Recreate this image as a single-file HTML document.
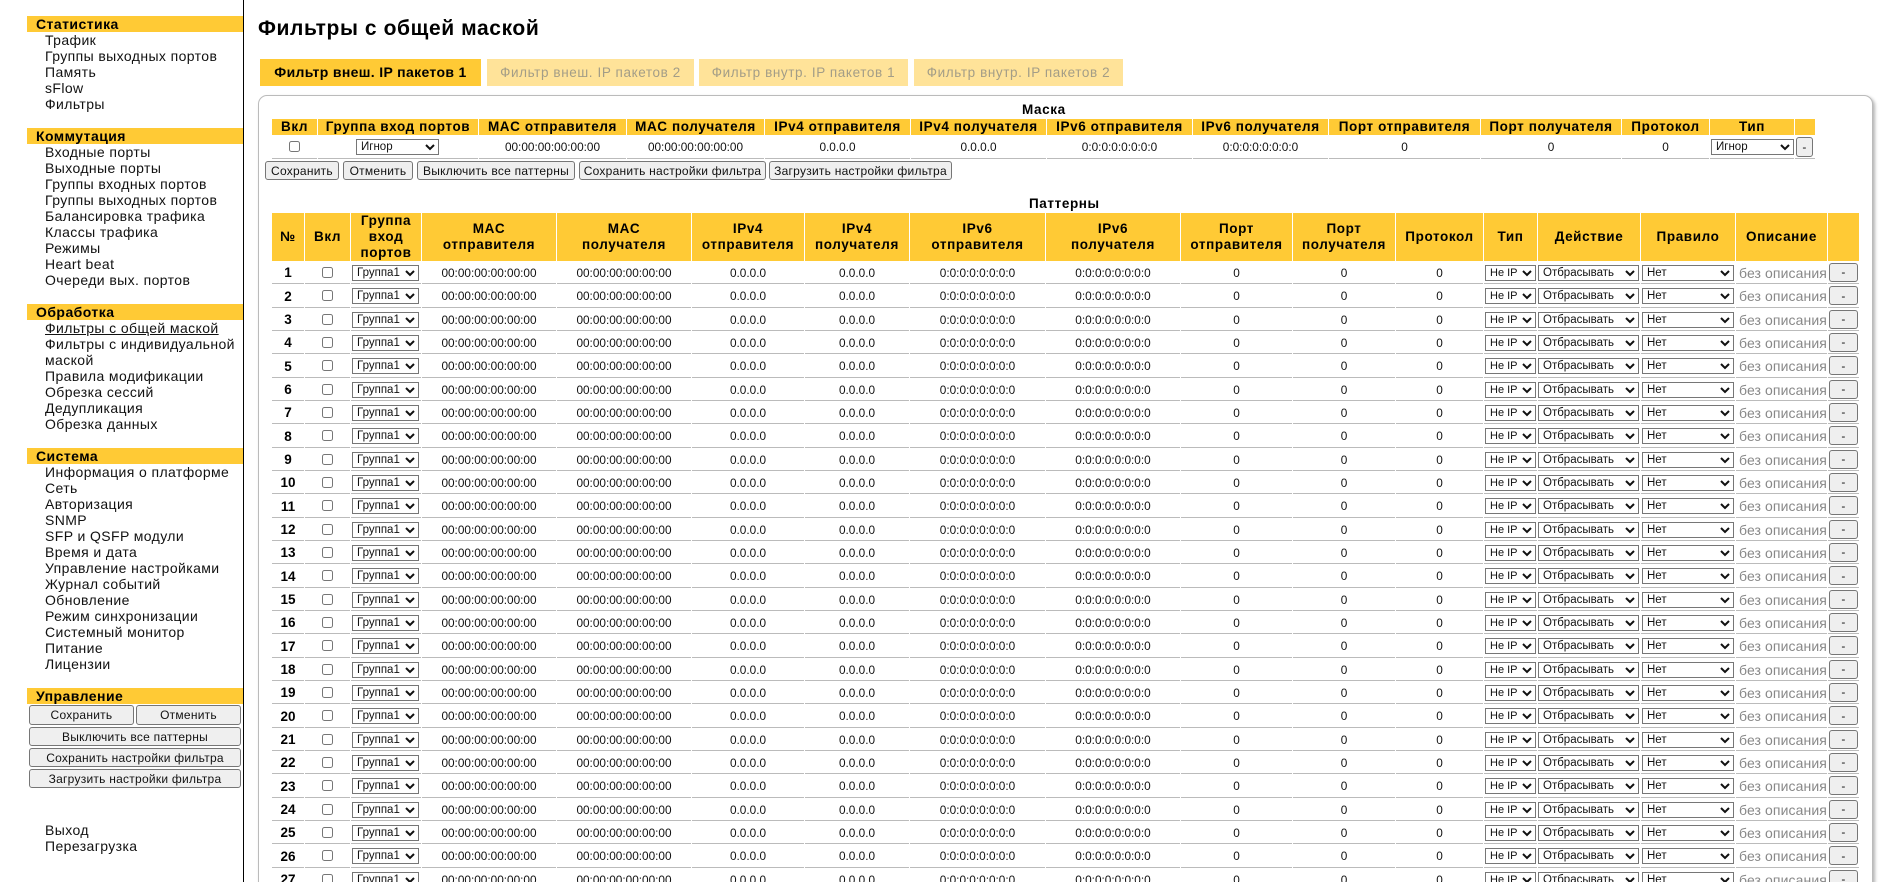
<!DOCTYPE html>
<html lang="ru"><head><meta charset="utf-8"><title>Фильтры с общей маской</title>
<style>
html,body{margin:0;padding:0;width:1903px;height:882px;overflow:hidden;background:#fff}
body{position:relative;font-family:"Liberation Sans","DejaVu Sans",sans-serif;color:#111;font-size:14px}
.abs,.h,.m,.btn,.tab{position:absolute}
.v{position:absolute;left:243px;top:0;width:1px;height:882px;background:#000}
.h{left:27px;width:216px;height:16px;line-height:16px;background:#ffca35;font-weight:bold;font-size:14px;letter-spacing:.45px;color:#000;padding-left:9px;box-sizing:border-box}
.m{left:45px;width:195px;line-height:16px;font-size:14px;letter-spacing:.4px;white-space:nowrap}
button{font-family:inherit;background:#efefef;border:1px solid #767676;border-radius:3px;padding:0;color:#111;box-sizing:border-box;font-size:12px;letter-spacing:.25px;margin:0}
.btn{height:19px;line-height:16px}
h1{position:absolute;left:258px;top:15px;margin:0;font-size:21px;line-height:28px;letter-spacing:.6px;color:#000;white-space:nowrap}
.tab{top:59px;height:27px;line-height:27px;text-align:center;font-size:13.5px;letter-spacing:.6px;background:#ffe399;color:#a39d87;white-space:nowrap}
.tab.on{background:#ffca35;color:#000;font-weight:bold;font-size:14px;letter-spacing:.35px}
.box{position:absolute;left:258px;top:95px;width:1615px;height:830px;border:1px solid #bbb;border-radius:9px;box-shadow:2px 2px 3px #b5b5b5;box-sizing:border-box;background:#fff}
.tt{position:absolute;font-weight:bold;font-size:13.5px;letter-spacing:.6px;line-height:16px;color:#000;white-space:nowrap}
table{position:absolute;left:271px;border-collapse:separate;border-spacing:1px 0;table-layout:fixed}
th{background:#ffca35;font-weight:bold;font-size:13.5px;letter-spacing:.6px;line-height:16px;padding:0;color:#000;text-align:center;overflow:hidden;white-space:nowrap}
td{padding:1px 0 0;height:23px;box-sizing:border-box;border-bottom:1px solid #bbb;text-align:center;vertical-align:middle;font-size:11.8px;color:#111;white-space:nowrap;overflow:hidden}
tr.b td{height:24px}
td.n{font-weight:bold;font-size:13.5px;color:#000}
input[type=checkbox]{width:11px;height:11px;display:block;margin:0 auto;position:relative;top:-.1px}
select{display:block;height:16px;padding:0;margin:0 0 0 1px;font-family:inherit;font-size:11.5px;letter-spacing:0;background:#fff;border:1px solid #767676;border-radius:0;color:#111;box-sizing:border-box;position:relative;top:.1px}
.g{width:67px}.t{width:51px;font-size:11px}.a{width:101px;margin-left:0}.r{width:92px}
.x{display:block;width:29px;height:19px;margin-left:1px;line-height:16px;position:relative;top:-.1px}
.d{display:block;width:91px;overflow:hidden;color:#888;font-size:14px;letter-spacing:.1px;text-align:left;padding-left:3px;box-sizing:border-box}
#mt td{height:24px}
#pt th{height:48px}
#mt th{height:16px}
</style></head><body>
<div class="h" style="top:16px">Статистика</div>
<div class="m" style="top:32px">Трафик</div>
<div class="m" style="top:48px">Группы выходных портов</div>
<div class="m" style="top:64px">Память</div>
<div class="m" style="top:80px">sFlow</div>
<div class="m" style="top:96px">Фильтры</div>
<div class="h" style="top:128px">Коммутация</div>
<div class="m" style="top:144px">Входные порты</div>
<div class="m" style="top:160px">Выходные порты</div>
<div class="m" style="top:176px">Группы входных портов</div>
<div class="m" style="top:192px">Группы выходных портов</div>
<div class="m" style="top:208px">Балансировка трафика</div>
<div class="m" style="top:224px">Классы трафика</div>
<div class="m" style="top:240px">Режимы</div>
<div class="m" style="top:256px">Heart beat</div>
<div class="m" style="top:272px">Очереди вых. портов</div>
<div class="h" style="top:304px">Обработка</div>
<div class="m" style="top:320px;text-decoration:underline">Фильтры с общей маской</div>
<div class="m" style="top:336px">Фильтры с индивидуальной</div>
<div class="m" style="top:352px">маской</div>
<div class="m" style="top:368px">Правила модификации</div>
<div class="m" style="top:384px">Обрезка сессий</div>
<div class="m" style="top:400px">Дедупликация</div>
<div class="m" style="top:416px">Обрезка данных</div>
<div class="h" style="top:448px">Система</div>
<div class="m" style="top:464px">Информация о платформе</div>
<div class="m" style="top:480px">Сеть</div>
<div class="m" style="top:496px">Авторизация</div>
<div class="m" style="top:512px">SNMP</div>
<div class="m" style="top:528px">SFP и QSFP модули</div>
<div class="m" style="top:544px">Время и дата</div>
<div class="m" style="top:560px">Управление настройками</div>
<div class="m" style="top:576px">Журнал событий</div>
<div class="m" style="top:592px">Обновление</div>
<div class="m" style="top:608px">Режим синхронизации</div>
<div class="m" style="top:624px">Системный монитор</div>
<div class="m" style="top:640px">Питание</div>
<div class="m" style="top:656px">Лицензии</div>
<div class="h" style="top:688px">Управление</div>
<button class="btn" style="left:29px;top:705px;width:105px;height:20px">Сохранить</button>
<button class="btn" style="left:136px;top:705px;width:105px;height:20px">Отменить</button>
<button class="btn" style="left:29px;top:727px;width:212px">Выключить все паттерны</button>
<button class="btn" style="left:29px;top:748px;width:212px">Сохранить настройки фильтра</button>
<button class="btn" style="left:29px;top:769px;width:212px">Загрузить настройки фильтра</button>
<div class="m" style="top:822px">Выход</div>
<div class="m" style="top:838px">Перезагрузка</div>
<div class="v"></div>
<h1>Фильтры с общей маской</h1>
<div class="tab on" style="left:260px;width:221px">Фильтр внеш. IP пакетов 1</div>
<div class="tab" style="left:487px;width:207px">Фильтр внеш. IP пакетов 2</div>
<div class="tab" style="left:699px;width:209px">Фильтр внутр. IP пакетов 1</div>
<div class="tab" style="left:914px;width:209px">Фильтр внутр. IP пакетов 2</div>
<div class="box"></div>
<div class="tt" style="left:1022px;top:102px">Маска</div>
<table id="mt" style="top:119px;width:1545px">
<colgroup><col style="width:45px"><col style="width:160px"><col style="width:147px"><col style="width:137px"><col style="width:145px"><col style="width:135px"><col style="width:145px"><col style="width:135px"><col style="width:151px"><col style="width:140px"><col style="width:87px"><col style="width:84px"><col style="width:20px"></colgroup>
<tr><th>Вкл</th><th>Группа вход портов</th><th>MAC отправителя</th><th>MAC получателя</th><th>IPv4 отправителя</th><th>IPv4 получателя</th><th>IPv6 отправителя</th><th>IPv6 получателя</th><th>Порт отправителя</th><th>Порт получателя</th><th>Протокол</th><th>Тип</th><th></th></tr>
<tr><td><input type="checkbox"></td><td><select style="width:83px;margin-left:38px"><option>Игнор</option></select></td><td>00:00:00:00:00:00</td><td>00:00:00:00:00:00</td><td>0.0.0.0</td><td>0.0.0.0</td><td>0:0:0:0:0:0:0:0</td><td>0:0:0:0:0:0:0:0</td><td>0</td><td>0</td><td>0</td><td><select style="width:83px"><option>Игнор</option></select></td><td><button class="x" style="width:17px;height:20px">-</button></td></tr>
</table>
<button class="btn" style="left:265px;top:161px;width:74px">Сохранить</button>
<button class="btn" style="left:343px;top:161px;width:70px">Отменить</button>
<button class="btn" style="left:417px;top:161px;width:158px">Выключить все паттерны</button>
<button class="btn" style="left:579px;top:161px;width:187px">Сохранить настройки фильтра</button>
<button class="btn" style="left:769px;top:161px;width:183px">Загрузить настройки фильтра</button>
<div class="tt" style="left:1029px;top:196px">Паттерны</div>
<table id="pt" style="top:213px;width:1588px">
<colgroup><col style="width:32px"><col style="width:45px"><col style="width:70px"><col style="width:134px"><col style="width:134px"><col style="width:112px"><col style="width:104px"><col style="width:135px"><col style="width:134px"><col style="width:111px"><col style="width:102px"><col style="width:87px"><col style="width:53px"><col style="width:102px"><col style="width:94px"><col style="width:91px"><col style="width:31px"></colgroup>
<tr><th>№</th><th>Вкл</th><th>Группа<br>вход<br>портов</th><th>MAC<br>отправителя</th><th>MAC<br>получателя</th><th>IPv4<br>отправителя</th><th>IPv4<br>получателя</th><th>IPv6<br>отправителя</th><th>IPv6<br>получателя</th><th>Порт<br>отправителя</th><th>Порт<br>получателя</th><th>Протокол</th><th>Тип</th><th>Действие</th><th>Правило</th><th>Описание</th><th></th></tr>
<tr><td class="n">1<td><input type="checkbox"><td><select class="g"><option>Группа1</select><td>00:00:00:00:00:00<td>00:00:00:00:00:00<td>0.0.0.0<td>0.0.0.0<td>0:0:0:0:0:0:0:0<td>0:0:0:0:0:0:0:0<td>0<td>0<td>0<td><select class="t"><option>Не IP</select><td><select class="a"><option>Отбрасывать</select><td><select class="r"><option>Нет</select><td><span class="d">без описания</span><td><button class="x">-</button></tr>
<tr class="b"><td class="n">2<td><input type="checkbox"><td><select class="g"><option>Группа1</select><td>00:00:00:00:00:00<td>00:00:00:00:00:00<td>0.0.0.0<td>0.0.0.0<td>0:0:0:0:0:0:0:0<td>0:0:0:0:0:0:0:0<td>0<td>0<td>0<td><select class="t"><option>Не IP</select><td><select class="a"><option>Отбрасывать</select><td><select class="r"><option>Нет</select><td><span class="d">без описания</span><td><button class="x">-</button></tr>
<tr><td class="n">3<td><input type="checkbox"><td><select class="g"><option>Группа1</select><td>00:00:00:00:00:00<td>00:00:00:00:00:00<td>0.0.0.0<td>0.0.0.0<td>0:0:0:0:0:0:0:0<td>0:0:0:0:0:0:0:0<td>0<td>0<td>0<td><select class="t"><option>Не IP</select><td><select class="a"><option>Отбрасывать</select><td><select class="r"><option>Нет</select><td><span class="d">без описания</span><td><button class="x">-</button></tr>
<tr><td class="n">4<td><input type="checkbox"><td><select class="g"><option>Группа1</select><td>00:00:00:00:00:00<td>00:00:00:00:00:00<td>0.0.0.0<td>0.0.0.0<td>0:0:0:0:0:0:0:0<td>0:0:0:0:0:0:0:0<td>0<td>0<td>0<td><select class="t"><option>Не IP</select><td><select class="a"><option>Отбрасывать</select><td><select class="r"><option>Нет</select><td><span class="d">без описания</span><td><button class="x">-</button></tr>
<tr class="b"><td class="n">5<td><input type="checkbox"><td><select class="g"><option>Группа1</select><td>00:00:00:00:00:00<td>00:00:00:00:00:00<td>0.0.0.0<td>0.0.0.0<td>0:0:0:0:0:0:0:0<td>0:0:0:0:0:0:0:0<td>0<td>0<td>0<td><select class="t"><option>Не IP</select><td><select class="a"><option>Отбрасывать</select><td><select class="r"><option>Нет</select><td><span class="d">без описания</span><td><button class="x">-</button></tr>
<tr><td class="n">6<td><input type="checkbox"><td><select class="g"><option>Группа1</select><td>00:00:00:00:00:00<td>00:00:00:00:00:00<td>0.0.0.0<td>0.0.0.0<td>0:0:0:0:0:0:0:0<td>0:0:0:0:0:0:0:0<td>0<td>0<td>0<td><select class="t"><option>Не IP</select><td><select class="a"><option>Отбрасывать</select><td><select class="r"><option>Нет</select><td><span class="d">без описания</span><td><button class="x">-</button></tr>
<tr><td class="n">7<td><input type="checkbox"><td><select class="g"><option>Группа1</select><td>00:00:00:00:00:00<td>00:00:00:00:00:00<td>0.0.0.0<td>0.0.0.0<td>0:0:0:0:0:0:0:0<td>0:0:0:0:0:0:0:0<td>0<td>0<td>0<td><select class="t"><option>Не IP</select><td><select class="a"><option>Отбрасывать</select><td><select class="r"><option>Нет</select><td><span class="d">без описания</span><td><button class="x">-</button></tr>
<tr class="b"><td class="n">8<td><input type="checkbox"><td><select class="g"><option>Группа1</select><td>00:00:00:00:00:00<td>00:00:00:00:00:00<td>0.0.0.0<td>0.0.0.0<td>0:0:0:0:0:0:0:0<td>0:0:0:0:0:0:0:0<td>0<td>0<td>0<td><select class="t"><option>Не IP</select><td><select class="a"><option>Отбрасывать</select><td><select class="r"><option>Нет</select><td><span class="d">без описания</span><td><button class="x">-</button></tr>
<tr><td class="n">9<td><input type="checkbox"><td><select class="g"><option>Группа1</select><td>00:00:00:00:00:00<td>00:00:00:00:00:00<td>0.0.0.0<td>0.0.0.0<td>0:0:0:0:0:0:0:0<td>0:0:0:0:0:0:0:0<td>0<td>0<td>0<td><select class="t"><option>Не IP</select><td><select class="a"><option>Отбрасывать</select><td><select class="r"><option>Нет</select><td><span class="d">без описания</span><td><button class="x">-</button></tr>
<tr><td class="n">10<td><input type="checkbox"><td><select class="g"><option>Группа1</select><td>00:00:00:00:00:00<td>00:00:00:00:00:00<td>0.0.0.0<td>0.0.0.0<td>0:0:0:0:0:0:0:0<td>0:0:0:0:0:0:0:0<td>0<td>0<td>0<td><select class="t"><option>Не IP</select><td><select class="a"><option>Отбрасывать</select><td><select class="r"><option>Нет</select><td><span class="d">без описания</span><td><button class="x">-</button></tr>
<tr class="b"><td class="n">11<td><input type="checkbox"><td><select class="g"><option>Группа1</select><td>00:00:00:00:00:00<td>00:00:00:00:00:00<td>0.0.0.0<td>0.0.0.0<td>0:0:0:0:0:0:0:0<td>0:0:0:0:0:0:0:0<td>0<td>0<td>0<td><select class="t"><option>Не IP</select><td><select class="a"><option>Отбрасывать</select><td><select class="r"><option>Нет</select><td><span class="d">без описания</span><td><button class="x">-</button></tr>
<tr><td class="n">12<td><input type="checkbox"><td><select class="g"><option>Группа1</select><td>00:00:00:00:00:00<td>00:00:00:00:00:00<td>0.0.0.0<td>0.0.0.0<td>0:0:0:0:0:0:0:0<td>0:0:0:0:0:0:0:0<td>0<td>0<td>0<td><select class="t"><option>Не IP</select><td><select class="a"><option>Отбрасывать</select><td><select class="r"><option>Нет</select><td><span class="d">без описания</span><td><button class="x">-</button></tr>
<tr><td class="n">13<td><input type="checkbox"><td><select class="g"><option>Группа1</select><td>00:00:00:00:00:00<td>00:00:00:00:00:00<td>0.0.0.0<td>0.0.0.0<td>0:0:0:0:0:0:0:0<td>0:0:0:0:0:0:0:0<td>0<td>0<td>0<td><select class="t"><option>Не IP</select><td><select class="a"><option>Отбрасывать</select><td><select class="r"><option>Нет</select><td><span class="d">без описания</span><td><button class="x">-</button></tr>
<tr class="b"><td class="n">14<td><input type="checkbox"><td><select class="g"><option>Группа1</select><td>00:00:00:00:00:00<td>00:00:00:00:00:00<td>0.0.0.0<td>0.0.0.0<td>0:0:0:0:0:0:0:0<td>0:0:0:0:0:0:0:0<td>0<td>0<td>0<td><select class="t"><option>Не IP</select><td><select class="a"><option>Отбрасывать</select><td><select class="r"><option>Нет</select><td><span class="d">без описания</span><td><button class="x">-</button></tr>
<tr><td class="n">15<td><input type="checkbox"><td><select class="g"><option>Группа1</select><td>00:00:00:00:00:00<td>00:00:00:00:00:00<td>0.0.0.0<td>0.0.0.0<td>0:0:0:0:0:0:0:0<td>0:0:0:0:0:0:0:0<td>0<td>0<td>0<td><select class="t"><option>Не IP</select><td><select class="a"><option>Отбрасывать</select><td><select class="r"><option>Нет</select><td><span class="d">без описания</span><td><button class="x">-</button></tr>
<tr><td class="n">16<td><input type="checkbox"><td><select class="g"><option>Группа1</select><td>00:00:00:00:00:00<td>00:00:00:00:00:00<td>0.0.0.0<td>0.0.0.0<td>0:0:0:0:0:0:0:0<td>0:0:0:0:0:0:0:0<td>0<td>0<td>0<td><select class="t"><option>Не IP</select><td><select class="a"><option>Отбрасывать</select><td><select class="r"><option>Нет</select><td><span class="d">без описания</span><td><button class="x">-</button></tr>
<tr class="b"><td class="n">17<td><input type="checkbox"><td><select class="g"><option>Группа1</select><td>00:00:00:00:00:00<td>00:00:00:00:00:00<td>0.0.0.0<td>0.0.0.0<td>0:0:0:0:0:0:0:0<td>0:0:0:0:0:0:0:0<td>0<td>0<td>0<td><select class="t"><option>Не IP</select><td><select class="a"><option>Отбрасывать</select><td><select class="r"><option>Нет</select><td><span class="d">без описания</span><td><button class="x">-</button></tr>
<tr><td class="n">18<td><input type="checkbox"><td><select class="g"><option>Группа1</select><td>00:00:00:00:00:00<td>00:00:00:00:00:00<td>0.0.0.0<td>0.0.0.0<td>0:0:0:0:0:0:0:0<td>0:0:0:0:0:0:0:0<td>0<td>0<td>0<td><select class="t"><option>Не IP</select><td><select class="a"><option>Отбрасывать</select><td><select class="r"><option>Нет</select><td><span class="d">без описания</span><td><button class="x">-</button></tr>
<tr><td class="n">19<td><input type="checkbox"><td><select class="g"><option>Группа1</select><td>00:00:00:00:00:00<td>00:00:00:00:00:00<td>0.0.0.0<td>0.0.0.0<td>0:0:0:0:0:0:0:0<td>0:0:0:0:0:0:0:0<td>0<td>0<td>0<td><select class="t"><option>Не IP</select><td><select class="a"><option>Отбрасывать</select><td><select class="r"><option>Нет</select><td><span class="d">без описания</span><td><button class="x">-</button></tr>
<tr class="b"><td class="n">20<td><input type="checkbox"><td><select class="g"><option>Группа1</select><td>00:00:00:00:00:00<td>00:00:00:00:00:00<td>0.0.0.0<td>0.0.0.0<td>0:0:0:0:0:0:0:0<td>0:0:0:0:0:0:0:0<td>0<td>0<td>0<td><select class="t"><option>Не IP</select><td><select class="a"><option>Отбрасывать</select><td><select class="r"><option>Нет</select><td><span class="d">без описания</span><td><button class="x">-</button></tr>
<tr><td class="n">21<td><input type="checkbox"><td><select class="g"><option>Группа1</select><td>00:00:00:00:00:00<td>00:00:00:00:00:00<td>0.0.0.0<td>0.0.0.0<td>0:0:0:0:0:0:0:0<td>0:0:0:0:0:0:0:0<td>0<td>0<td>0<td><select class="t"><option>Не IP</select><td><select class="a"><option>Отбрасывать</select><td><select class="r"><option>Нет</select><td><span class="d">без описания</span><td><button class="x">-</button></tr>
<tr><td class="n">22<td><input type="checkbox"><td><select class="g"><option>Группа1</select><td>00:00:00:00:00:00<td>00:00:00:00:00:00<td>0.0.0.0<td>0.0.0.0<td>0:0:0:0:0:0:0:0<td>0:0:0:0:0:0:0:0<td>0<td>0<td>0<td><select class="t"><option>Не IP</select><td><select class="a"><option>Отбрасывать</select><td><select class="r"><option>Нет</select><td><span class="d">без описания</span><td><button class="x">-</button></tr>
<tr class="b"><td class="n">23<td><input type="checkbox"><td><select class="g"><option>Группа1</select><td>00:00:00:00:00:00<td>00:00:00:00:00:00<td>0.0.0.0<td>0.0.0.0<td>0:0:0:0:0:0:0:0<td>0:0:0:0:0:0:0:0<td>0<td>0<td>0<td><select class="t"><option>Не IP</select><td><select class="a"><option>Отбрасывать</select><td><select class="r"><option>Нет</select><td><span class="d">без описания</span><td><button class="x">-</button></tr>
<tr><td class="n">24<td><input type="checkbox"><td><select class="g"><option>Группа1</select><td>00:00:00:00:00:00<td>00:00:00:00:00:00<td>0.0.0.0<td>0.0.0.0<td>0:0:0:0:0:0:0:0<td>0:0:0:0:0:0:0:0<td>0<td>0<td>0<td><select class="t"><option>Не IP</select><td><select class="a"><option>Отбрасывать</select><td><select class="r"><option>Нет</select><td><span class="d">без описания</span><td><button class="x">-</button></tr>
<tr><td class="n">25<td><input type="checkbox"><td><select class="g"><option>Группа1</select><td>00:00:00:00:00:00<td>00:00:00:00:00:00<td>0.0.0.0<td>0.0.0.0<td>0:0:0:0:0:0:0:0<td>0:0:0:0:0:0:0:0<td>0<td>0<td>0<td><select class="t"><option>Не IP</select><td><select class="a"><option>Отбрасывать</select><td><select class="r"><option>Нет</select><td><span class="d">без описания</span><td><button class="x">-</button></tr>
<tr class="b"><td class="n">26<td><input type="checkbox"><td><select class="g"><option>Группа1</select><td>00:00:00:00:00:00<td>00:00:00:00:00:00<td>0.0.0.0<td>0.0.0.0<td>0:0:0:0:0:0:0:0<td>0:0:0:0:0:0:0:0<td>0<td>0<td>0<td><select class="t"><option>Не IP</select><td><select class="a"><option>Отбрасывать</select><td><select class="r"><option>Нет</select><td><span class="d">без описания</span><td><button class="x">-</button></tr>
<tr><td class="n">27<td><input type="checkbox"><td><select class="g"><option>Группа1</select><td>00:00:00:00:00:00<td>00:00:00:00:00:00<td>0.0.0.0<td>0.0.0.0<td>0:0:0:0:0:0:0:0<td>0:0:0:0:0:0:0:0<td>0<td>0<td>0<td><select class="t"><option>Не IP</select><td><select class="a"><option>Отбрасывать</select><td><select class="r"><option>Нет</select><td><span class="d">без описания</span><td><button class="x">-</button></tr>
</table>
</body></html>
